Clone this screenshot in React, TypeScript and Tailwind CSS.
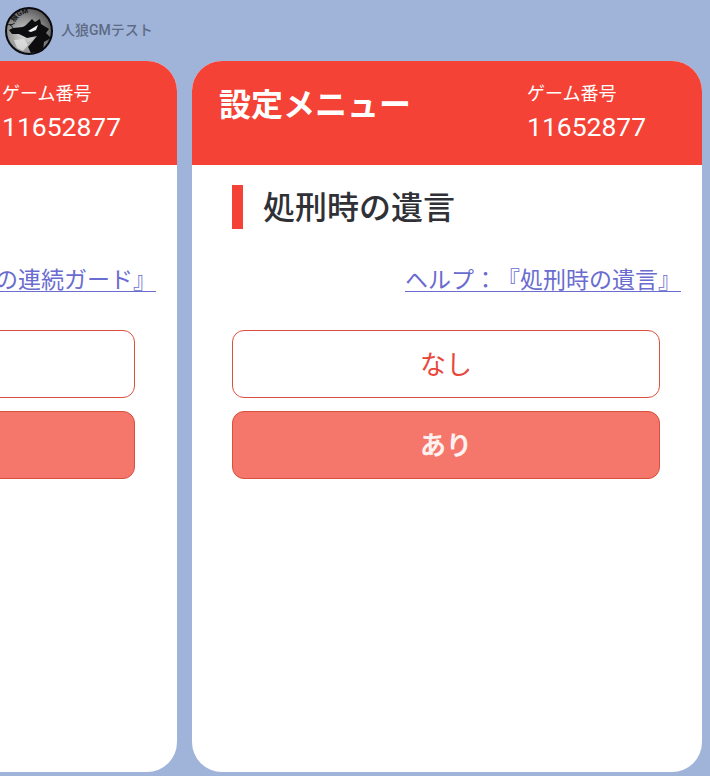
const FONT = "font-['Roboto','Noto_Sans_CJK_JP',sans-serif] [text-spacing-trim:space-all]";

function Avatar() {
  return (
    <svg width="48" height="48" viewBox="0 0 48 48" className="shrink-0">
      <defs>
        <radialGradient id="fur" cx="0.4" cy="0.6" r="0.7">
          <stop offset="0" stopColor="#d8d8d8" />
          <stop offset="0.55" stopColor="#8f8f8f" />
          <stop offset="1" stopColor="#4a4a4a" />
        </radialGradient>
        <path id="ringText" d="M7 22 A18 18 0 0 1 35 9" />
      </defs>
      <circle cx="24" cy="24" r="23" fill="url(#fur)" stroke="#0c0c10" strokeWidth="2" />
      <text fontSize="7" fontWeight="700" fill="#111" fontFamily="Roboto, sans-serif">
        <textPath href="#ringText">人狼GM</textPath>
      </text>
      {/* wolf head */}
      <path
        d="M4 23 C10 19 17 22 21 18 L27 12 L30 15 L35 12 L36 17 L44 22 L41 26 L46 31 L39 35 L38 44 L26 46 L23 40 L28 34 L32 29 L22 31 L14 27 L7 27 Z"
        fill="#0d0d0f"
      />
      <path d="M23 24 L33 18 L31 23 L26 25 Z" fill="#f2f2f2" />
      <path d="M20 32 L30 30 L27 34 L23 35 Z" fill="#c8c8c8" />
      <path d="M9 33 L19 32 L23 38 L18 44 L12 41 Z" fill="#e4e4e4" opacity="0.75" />
    </svg>
  );
}

function Card({ menu, heading, help }: { menu: string; heading: string; help: string }) {
  return (
    <section className="flex h-[711px] w-[510px] shrink-0 flex-col overflow-hidden rounded-[30px] bg-white">
      <header className="flex h-[104px] shrink-0 bg-[#f44336] text-white">
        <h1 className="ml-[27px] mt-[22px] w-[309px] text-[32px] leading-[44px] font-bold whitespace-nowrap">{menu}</h1>
        <div className="mt-[21px] -ml-px">
          <p className="text-[18px] leading-[24px]">ゲーム番号</p>
          <p className="mt-[5px] text-[26.5px] leading-[32px]">11652877</p>
        </div>
      </header>
      <div className="flex flex-col pl-[40px] pr-[42px] pt-[20px]">
        <div className="flex h-[44px] items-center gap-[21px]">
          <span className="h-[44px] w-[11px] shrink-0 bg-[#f44336]" />
          <h2 className="mt-[2px] -ml-px text-[32px] leading-[44px] font-medium whitespace-nowrap text-[#2f3136]">{heading}</h2>
        </div>
        <a className="mt-[37px] -mr-[21px] self-end text-[23px] leading-[30px] whitespace-nowrap text-[#6a6cd0] underline underline-offset-[3px] decoration-1">
          {help}
        </a>
        <div className="mt-[34px] flex flex-col gap-[13px]">
          <button className="h-[68px] w-full rounded-[12px] border-[1.5px] border-[#d9503f] bg-white pt-[2px] text-[26px] text-[#e8483c]">
            なし
          </button>
          <button className="h-[68px] w-full rounded-[12px] border-[1.5px] border-[#d9503f] bg-[#f5766a] pt-[2px] text-[26px] font-bold text-[#fff1ef]">
            あり
          </button>
        </div>
      </div>
    </section>
  );
}

export default function App() {
  return (
    <div className={`${FONT} h-[776px] w-[710px] overflow-hidden bg-[#a0b4da]`}>
      <div className="flex h-[61px] items-center gap-[8px] pl-[5px]">
        <Avatar />
        <span className="text-[14px] font-medium text-[#5d6b84]">人狼GMテスト</span>
      </div>
      <div className="-ml-[333px] flex w-[1100px] gap-[15px]">
        <Card menu="設定メニュー" heading="狩人の連続ガード" help="ヘルプ：『狩人の連続ガード』" />
        <Card menu="設定メニュー" heading="処刑時の遺言" help="ヘルプ：『処刑時の遺言』" />
      </div>
    </div>
  );
}
